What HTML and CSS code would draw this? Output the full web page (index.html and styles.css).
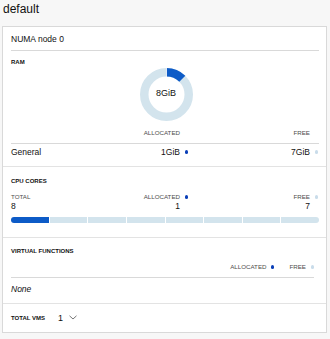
FILE: index.html
```html
<!DOCTYPE html>
<html lang="en">
<head>
    <meta charset="UTF-8">
    <title>NUMA - default</title>
    <link rel="stylesheet" href="styles.css">
</head>
<body>
    <h1 class="pool-title">default</h1>

    <div class="card">
        <div class="card-head">NUMA node 0</div>

        <div class="block ram">
            <h4 class="block-label">RAM</h4>
            <div class="donut">
                <svg width="53" height="53" viewBox="0 0 53 53">
                    <circle cx="26.5" cy="26.5" r="22.25" fill="none" stroke="#d3e4ed" stroke-width="8.5"></circle>
                    <!-- 1 of 8 GiB -->
                    <circle cx="26.5" cy="26.5" r="22.25" fill="none" stroke="#0d5bc7" stroke-width="8.5"
                        stroke-dasharray="17.47 200" transform="rotate(-90 26.5 26.5)"></circle>
                    <line x1="26.5" y1="0" x2="26.5" y2="9" stroke="#fff" stroke-width="0.8"></line>
                </svg>
                <span class="donut-total">8GiB</span>
            </div>
            <div class="grid legend">
                <span></span>
                <span class="cell">ALLOCATED<i class="dot hidden"></i></span>
                <span class="cell">FREE<i class="dot hidden"></i></span>
            </div>
            <div class="grid values">
                <span>General</span>
                <span class="cell">1GiB<i class="dot"></i></span>
                <span class="cell">7GiB<i class="dot free"></i></span>
            </div>
        </div>

        <div class="block cpu">
            <h4 class="block-label">CPU CORES</h4>
            <div class="grid legend">
                <span>TOTAL</span>
                <span class="cell">ALLOCATED<i class="dot"></i></span>
                <span class="cell">FREE<i class="dot free"></i></span>
            </div>
            <div class="grid counts">
                <span>8</span>
                <span class="cell">1<i class="dot hidden"></i></span>
                <span class="cell">7<i class="dot hidden"></i></span>
            </div>
            <div class="bar">
                <span class="seg used"></span>
                <span class="seg"></span>
                <span class="seg"></span>
                <span class="seg"></span>
                <span class="seg"></span>
                <span class="seg"></span>
                <span class="seg"></span>
                <span class="seg"></span>
            </div>
        </div>

        <div class="block vf">
            <h4 class="block-label">VIRTUAL FUNCTIONS</h4>
            <div class="vf-legend">
                <span class="cell">ALLOCATED<i class="dot"></i></span>
                <span class="cell">FREE<i class="dot free"></i></span>
            </div>
            <p class="none">None</p>
        </div>

        <div class="block vms">
            <span class="block-label">TOTAL VMS</span>
            <span class="vm-count">1</span>
            <svg class="chevron" width="8" height="5" viewBox="0 0 8 5">
                <polyline points="0.5,0.8 4,4 7.5,0.8" fill="none" stroke="#666" stroke-width="0.9"></polyline>
            </svg>
        </div>
    </div>
</body>
</html>
```

FILE: styles.css
```css
body {
    margin: 0 0 0 2px;
    background: #f7f7f7;
    color: #111;
    font-family: "Liberation Sans", Arial, sans-serif;
}
.pool-title {
    margin: 0 0 8px 1px;
    font-size: 12px;
    line-height: 18px;
    font-weight: normal;
}
.card {
    width: 325px;
    box-sizing: border-box;
    background: #fff;
    border: 1px solid #d9d9d9;
}
.card-head {
    margin: 0 7px 0 8px;
    padding-top: 1px;
    height: 22px;
    line-height: 22px;
    font-size: 8.5px;
    border-bottom: 1px solid #d9d9d9;
}
.block {
    padding: 0 7px 0 8px;
    border-bottom: 1px solid #e3e3e3;
}
.block-label {
    margin: 0;
    font-size: 6px;
    line-height: 8px;
    height: 8px;
    font-weight: bold;
    color: #111;
}
.ram {
    padding-top: 7px;
    padding-bottom: 8px;
}
.donut {
    position: relative;
    width: 53px;
    height: 53px;
    margin: 2px auto 0;
    left: 1px;
}
.donut svg {
    display: block;
}
.donut-total {
    position: absolute;
    top: 0;
    left: 0;
    width: 53px;
    line-height: 51px;
    text-align: center;
    font-size: 9px;
}
.grid {
    display: grid;
    grid-template-columns: 1fr 80px 130px;
}
.cell {
    display: flex;
    align-items: center;
    justify-content: flex-end;
}
.legend {
    font-size: 6.2px;
    line-height: 8px;
    height: 8px;
    color: #4d4d4d;
    margin-top: 8px;
}
.ram .legend {
    padding-bottom: 6px;
    border-bottom: 1px solid #d9d9d9;
}
.values {
    margin-top: 2px;
    font-size: 8.5px;
    line-height: 12px;
    height: 12px;
}
.dot {
    display: inline-block;
    width: 3.5px;
    height: 3.5px;
    border-radius: 50%;
    background: #0a3fb8;
    margin: 0 1px 0 4.5px;
}
.dot.free {
    background: #c9dcea;
}
.dot.hidden {
    visibility: hidden;
}
.cpu {
    padding-top: 10px;
    padding-bottom: 14px;
}
.counts {
    font-size: 8.5px;
    line-height: 11px;
    height: 11px;
}
.bar {
    display: flex;
    gap: 1px;
    height: 6px;
    margin-top: 5px;
    border-radius: 3px;
    overflow: hidden;
}
.seg {
    flex: 1;
    background: #d3e4ed;
}
.seg.used {
    background: #0d5bc7;
}
.vf {
    padding-top: 9px;
    padding-right: 12px;
    padding-bottom: 8px;
}
.vf-legend {
    display: flex;
    justify-content: flex-end;
    gap: 15px;
    margin-top: 8px;
    height: 8px;
    line-height: 8px;
    font-size: 6.2px;
    color: #4d4d4d;
    padding-bottom: 6px;
    border-bottom: 1px solid #d9d9d9;
}
.vf-legend .dot {
    margin-right: 0;
}
.none {
    margin: 5px 0 0;
    font-size: 8.5px;
    line-height: 12px;
    font-style: italic;
}
.vms {
    display: flex;
    align-items: center;
    height: 28px;
    border-bottom: none;
}
.vm-count {
    margin-left: 13px;
    font-size: 9px;
}
.chevron {
    margin-left: 6px;
    margin-top: -2px;
}
```
